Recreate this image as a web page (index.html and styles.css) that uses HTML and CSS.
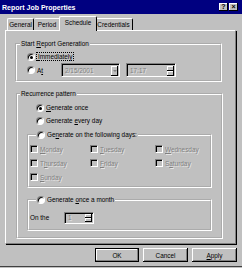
FILE: index.html
```html
<!DOCTYPE html>
<html lang="en">
<head>
    <meta charset="UTF-8">
    <title>Report Job Properties</title>
    <link rel="stylesheet" href="styles.css">
</head>
<body>
    <div class="dialog">
        <div class="titlebar">
            <span class="title">Report Job Properties</span>
            <div class="caption-btns">
                <span class="cbtn">?</span>
                <span class="cbtn">&times;</span>
            </div>
        </div>
        <div class="main">
            <div class="tabs">
                <div class="tab tab-general">General</div>
                <div class="tab tab-period">Period</div>
                <div class="tab tab-schedule active">Schedule</div>
                <div class="tab tab-cred">Credentials</div>
            </div>
            <div class="panel">
                <fieldset class="group start">
                    <legend>Start <u>R</u>eport Generation</legend>
                    <div class="row">
                        <span class="radio checked"></span>
                        <span class="focus"><u>I</u>mmediately</span>
                    </div>
                    <div class="row row-at">
                        <span class="radio"></span>
                        <span class="lbl-at">A<u>t</u></span>
                        <div class="field date">
                            <span class="val">2/15/2001</span>
                            <span class="drop"></span>
                        </div>
                        <div class="field time">
                            <span class="val">17:17</span>
                            <span class="spin"><i></i><i></i></span>
                        </div>
                    </div>
                </fieldset>

                <fieldset class="group recur">
                    <legend>Recurrence pattern</legend>
                    <div class="row opt">
                        <span class="radio checked"></span>
                        <span><u>G</u>enerate once</span>
                    </div>
                    <div class="row opt">
                        <span class="radio"></span>
                        <span>Generate <u>e</u>very day</span>
                    </div>
                    <fieldset class="group sub days">
                        <legend><span class="radio"></span><span>Ge<u>n</u>erate on the following days:</span></legend>
                        <div class="day-grid">
                            <div class="day"><span class="check"></span><span class="dis"><u>M</u>onday</span></div>
                            <div class="day"><span class="check"></span><span class="dis"><u>T</u>uesday</span></div>
                            <div class="day"><span class="check"></span><span class="dis"><u>W</u>ednesday</span></div>
                            <div class="day"><span class="check"></span><span class="dis">T<u>h</u>ursday</span></div>
                            <div class="day"><span class="check"></span><span class="dis"><u>F</u>riday</span></div>
                            <div class="day"><span class="check"></span><span class="dis">S<u>a</u>turday</span></div>
                            <div class="day"><span class="check"></span><span class="dis"><u>S</u>unday</span></div>
                        </div>
                    </fieldset>
                    <fieldset class="group sub month">
                        <legend><span class="radio"></span><span>Generate <u>o</u>nce a month</span></legend>
                        <div class="row">
                            <span class="lbl-on">On the</span>
                            <div class="field num">
                                <span class="val">1</span>
                                <span class="spin"><i></i><i></i></span>
                            </div>
                        </div>
                    </fieldset>
                </fieldset>
            </div>
        </div>
        <div class="buttons">
            <button class="btn default">OK</button>
            <button class="btn">Cancel</button>
            <button class="btn"><u>A</u>pply</button>
        </div>
    </div>
</body>
</html>
```

FILE: styles.css
```css
html, body {
    margin: 0;
    padding: 0;
}
body {
    width: 242px;
    height: 268px;
    overflow: hidden;
    background: #c0c0c0;
    font-family: "Liberation Sans", Arial, sans-serif;
    font-size: 6.4px;
    color: #000;
}
.dialog {
    height: 267px;
    box-sizing: border-box;
    border-bottom: 1px solid #404040;
}
.titlebar {
    height: 14px;
    background: #000080;
    color: #fff;
    display: flex;
    align-items: center;
    justify-content: space-between;
    padding: 0 4px 0 2px;
    box-sizing: border-box;
}
.title {
    font-weight: bold;
    font-size: 7px;
}
.caption-btns {
    display: flex;
    gap: 1px;
}
.cbtn {
    width: 9px;
    height: 8px;
    background: #c0c0c0;
    box-shadow: inset -1px -1px #000, inset 1px 1px #fff;
    color: #000;
    font: bold 7px/8px "Liberation Sans", Arial, sans-serif;
    text-align: center;
}
.main {
    padding: 2px 6px 0 5px;
}
.tabs {
    display: flex;
    align-items: flex-end;
    height: 14px;
    padding-left: 2px;
}
.tab {
    height: 12px;
    box-sizing: border-box;
    border: 1px solid;
    border-color: #fff #000 transparent #fff;
    border-bottom: none;
    border-radius: 2px 2px 0 0;
    text-align: center;
    line-height: 11px;
    background: #c0c0c0;
}
.tab-general { width: 27px; }
.tab-period { width: 27px; border-left: none; }
.tab-schedule { width: 34px; }
.tab-cred { width: 38px; border-left: none; }
.tab.active {
    height: 15px;
    margin: 0 -2px -1px;
    width: 38px;
    line-height: 12px;
    position: relative;
    z-index: 1;
}
.panel {
    height: 214px;
    box-sizing: border-box;
    border-top: 1px solid #fff;
    border-left: 1px solid #fff;
    border-right: 1px solid #808080;
    border-bottom: 1px solid #808080;
    box-shadow: 1px 1px 0 #000;
    padding: 8px 0 0 9px;
}
.group {
    margin: 0;
    box-sizing: border-box;
    border: 2px groove #fff;
    min-width: 0;
}
.group legend {
    padding: 0 1px;
    margin-left: -7px;
    line-height: 9px;
}
.start {
    width: 207px;
    height: 43px;
    padding: 2px 6px 0 10px;
}
.row {
    display: flex;
    align-items: center;
    height: 13px;
}
.row-at {
    height: 14px;
}
.radio {
    width: 8px;
    height: 8px;
    box-sizing: border-box;
    border-radius: 50%;
    border: 1px solid;
    border-color: #808080 #fff #fff #808080;
    background: #fff;
    box-shadow: inset 1px 1px 0 #000;
    margin-right: 2px;
    flex-shrink: 0;
    position: relative;
}
.radio.checked::after {
    content: "";
    position: absolute;
    left: 2px;
    top: 2px;
    width: 3px;
    height: 3px;
    border-radius: 50%;
    background: #000;
}
.focus {
    outline: 1px dotted #000;
    padding: 0 1px;
}
.lbl-at {
    width: 24px;
}
.field {
    display: flex;
    align-items: center;
    justify-content: space-between;
    box-sizing: border-box;
    height: 14px;
    border: 1px solid;
    border-color: #808080 #fff #fff #808080;
    box-shadow: inset 1px 1px 0 #000;
    background: #c0c0c0;
    padding: 1px 1px 0 3px;
}
.val {
    color: #808080;
    text-shadow: 1px 1px 0 rgba(255,255,255,0.6);
}
.date {
    width: 59px;
}
.time {
    width: 50px;
    margin-left: 6px;
}
.drop {
    width: 7px;
    height: 10px;
    background: #c0c0c0;
    box-shadow: inset -1px -1px #000, inset 1px 1px #fff;
    position: relative;
}
.drop::after {
    content: "";
    position: absolute;
    left: 2px;
    top: 4px;
    border: 2px solid transparent;
    border-top-color: #808080;
    border-bottom: none;
}
.spin {
    display: flex;
    flex-direction: column;
    height: 10px;
}
.spin i {
    width: 7px;
    height: 5px;
    background: #c0c0c0;
    box-shadow: inset -1px -1px #000, inset 1px 1px #fff;
}
.recur {
    width: 207px;
    height: 150px;
    margin: 7px 0 0 1px;
    padding: 3px 9px 0 9px;
}
.opt {
    padding-left: 9px;
}
.sub legend {
    display: flex;
    align-items: center;
    margin-left: 6px;
}
.days {
    height: 58px;
    margin-top: 3px;
    padding: 3px 2px 0 1px;
}
.day-grid {
    display: grid;
    grid-template-columns: 60px 65px 1fr;
    grid-auto-rows: 14px;
}
.day {
    display: flex;
    align-items: center;
}
.check {
    width: 8px;
    height: 8px;
    box-sizing: border-box;
    border: 1px solid;
    border-color: #808080 #fff #fff #808080;
    box-shadow: inset 1px 1px 0 #000;
    background: #c0c0c0;
    margin-right: 2px;
}
.dis {
    color: #808080;
    text-shadow: 1px 1px 0 rgba(255,255,255,0.6);
}
.month {
    height: 36px;
    margin-top: 7px;
    padding: 7px 2px 0 1px;
}
.lbl-on {
    width: 34px;
}
.num {
    width: 30px;
    height: 12px;
    padding-top: 0;
}
.num .spin {
    height: 8px;
}
.num .spin i {
    height: 4px;
}
.buttons {
    display: flex;
    justify-content: flex-end;
    gap: 4px;
    padding: 4px 5px 0 0;
}
.btn {
    width: 45px;
    height: 14px;
    margin: 0;
    padding: 0;
    border: none;
    background: #c0c0c0;
    box-shadow: inset -1px -1px #000, inset 1px 1px #fff, inset -2px -2px #808080;
    font-family: "Liberation Sans", Arial, sans-serif;
    font-size: 6.4px;
    color: #000;
}
.btn.default {
    width: 44px;
    box-shadow: inset 0 0 0 1px #000, inset -2px -2px #808080, inset 2px 2px #fff;
}
```
